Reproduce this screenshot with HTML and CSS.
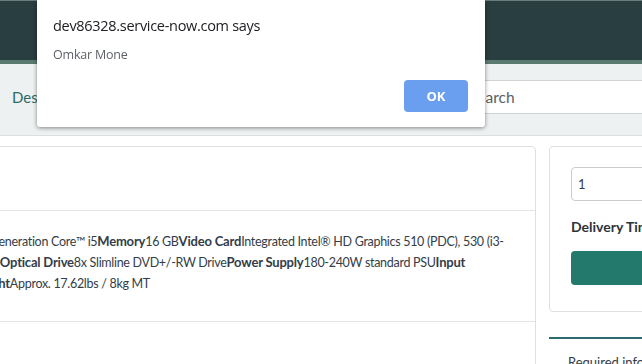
FILE: index.html
```html
<!DOCTYPE html>
<html lang="en">

<head>
    <meta charset="UTF-8">
    <meta name="viewport" content="width=device-width, initial-scale=1.0">
    <title>Item Details</title>
<link rel="stylesheet" href="styles.css">
</head>

<body>
    <div class="header"></div>
    <div class="header-strip"></div>

    <div class="nav">
      <a class="nav-link" href="#">Desktop</a>
      <input class="nav-search" type="text" placeholder="Search">
    </div>

    <div class="main">
      <div class="detail-card">
        <div class="detail-row detail-title"></div>
        <div class="detail-row detail-desc">
          <p>6th Generation Core™ i5<b>Memory</b>16 GB<b>Video Card</b>Integrated Intel® HD Graphics 510 (PDC), 530 (i3-<br>
          6100)<b>Optical Drive</b>8x Slimline DVD+/-RW Drive<b>Power Supply</b>180-240W standard PSU<b>Input</b><br>
          <b>Weight</b>Approx. 17.62lbs / 8kg MT</p>
        </div>
        <div class="detail-row"></div>
      </div>

      <div class="side">
        <div class="order-card">
          <input class="order-qty" type="text" value="1">
          <div class="order-label">Delivery Time</div>
          <a class="order-btn" href="#"></a>
        </div>
        <div class="side-info">Required information</div>
      </div>
    </div>

    <div class="alert">
      <div class="alert-title">dev86328.service-now.com says</div>
      <div class="alert-msg">Omkar Mone</div>
      <div class="alert-actions">
        <button class="alert-ok">OK</button>
      </div>
    </div>
</body>

</html>
```
FILE: styles.css
```css
body {
  margin: 0;
  font-family: Lato, "Open Sans", sans-serif;
  color: #343d47;
  background: #fff;
  overflow: hidden;
}

.header {
  height: 59px;
  background-color: #293e40;
  border-top: 1px solid #6a7b7c;
}

.header-strip {
  height: 4px;
  background-color: #5b7a6f;
}

.nav {
  display: flex;
  align-items: center;
  justify-content: space-between;
  height: 66px;
  padding: 0 0 5px 12px;
  background-color: #eef1f1;
  border-bottom: 1px solid #dcdfdf;
}

.nav-link {
  color: #2e6b63;
  font-size: 15px;
  text-decoration: none;
}

.nav-search {
  box-sizing: border-box;
  width: 210px;
  height: 34px;
  margin-right: -28px;
  padding: 0 8px;
  border: 1px solid #cfd3d3;
  font-family: inherit;
  font-size: 15.5px;
}

.nav-search::placeholder {
  color: #5b5f63;
}

/* page is scrolled sideways, so the left part sits off screen */
.main {
  display: flex;
  gap: 13px;
  margin-left: -330px;
  padding-top: 10px;
}

.detail-card {
  width: 864px;
  border: 1px solid #dddfe1;
  border-radius: 4px;
  flex-shrink: 0;
}

.detail-row {
  border-top: 1px solid #e2e4e6;
}

.detail-row:first-child {
  border-top: 0;
}

.detail-title {
  height: 63px;
}

.detail-desc {
  height: 110px;
}

.detail-desc p {
  margin: 0;
  padding: 20px 0 0 298px;
  font-size: 12.5px;
  letter-spacing: -0.3px;
  line-height: 20px;
  color: #343d47;
  white-space: nowrap;
}

.detail-desc b {
  font-weight: 700;
  font-size: 13px;
  letter-spacing: -0.2px;
}

.detail-row:last-child {
  height: 60px;
}

.side {
  width: 240px;
  flex-shrink: 0;
}

.order-card {
  padding: 20px 21px 26px;
  border: 1px solid #dddfe1;
  border-radius: 4px;
}

.order-qty {
  box-sizing: border-box;
  width: 100%;
  height: 34px;
  padding: 0 6px;
  border: 1px solid #c8cccf;
  border-radius: 4px;
  font-family: inherit;
  font-size: 13px;
  color: #343d47;
}

.order-label {
  margin-top: 17px;
  font-size: 14px;
  font-weight: 700;
  color: #2e3338;
}

.order-btn {
  display: block;
  height: 34px;
  margin-top: 16px;
  background-color: #23796b;
  border-radius: 4px;
}

.side-info {
  margin-top: 25px;
  padding: 15px 19px;
  border-top: 2px solid #2d6b70;
  font-size: 13px;
  color: #343d47;
}

.alert {
  position: fixed;
  top: 0;
  left: 37px;
  box-sizing: border-box;
  width: 448px;
  height: 127px;
  padding: 16px 17px 0 16px;
  background: #fff;
  border-radius: 0 0 3px 3px;
  box-shadow: 0 1px 4px rgba(0, 0, 0, 0.45);
  font-family: "Open Sans", sans-serif;
}

.alert-title {
  font-size: 14.5px;
  color: #202124;
  letter-spacing: -0.3px;
}

.alert-msg {
  margin-top: 11px;
  font-size: 12.5px;
  color: #5f6368;
  letter-spacing: -0.2px;
}

.alert-actions {
  display: flex;
  justify-content: flex-end;
  margin-top: 17px;
}

.alert-ok {
  width: 64px;
  height: 32px;
  border: 0;
  border-radius: 4px;
  background-color: #6a9ff0;
  color: #fff;
  font-family: inherit;
  font-size: 13px;
  font-weight: 700;
}
```
